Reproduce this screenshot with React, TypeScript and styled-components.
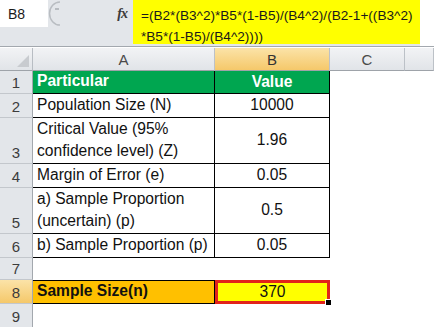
import React from 'react';
import styled, { createGlobalStyle, css } from 'styled-components';

const GlobalStyle = createGlobalStyle`
  html, body {
    margin: 0;
    padding: 0;
    background: #ffffff;
  }
  body {
    font-family: 'Liberation Sans', Arial, sans-serif;
  }
`;

const Page = styled.div`
  width: 434px;
  height: 327px;
  overflow: hidden;
  background: #ffffff;
  display: flex;
  flex-direction: column;
`;

const FormulaBar = styled.div`
  display: flex;
  height: 46px;
  background: #e3e6ea;
  border-bottom: 1px solid #a3a8ae;
  flex-shrink: 0;
`;

const LeftPanel = styled.div`
  width: 133px;
  display: flex;
  flex-direction: column;
`;

const TopStrip = styled.div`
  height: 27px;
  display: flex;
  align-items: center;
`;

const NameBox = styled.div`
  width: 48px;
  height: 27px;
  background: #ffffff;
  box-sizing: border-box;
  padding-left: 8px;
  display: flex;
  align-items: center;
  font-size: 14px;
  color: #1a1a1a;
`;

const Splitter = styled.svg`
  width: 14px;
  height: 27px;
  flex-shrink: 0;
`;

const FxLabel = styled.div`
  margin-left: auto;
  margin-right: 6px;
  font-family: 'Liberation Serif', 'Times New Roman', serif;
  font-style: italic;
  font-weight: bold;
  font-size: 14px;
  color: #3a3a3a;
  letter-spacing: -1px;
`;

const FormulaInput = styled.div`
  width: 287px;
  height: 44px;
  background: #ffff00;
  box-sizing: border-box;
  padding: 5px 0 0 8px;
  font-size: 13.6px;
  line-height: 21px;
  color: #1a1a1a;
  white-space: nowrap;
`;

const FormulaRest = styled.div`
  flex: 1;
  background: #ffffff;
`;

const Sheet = styled.div`
  display: grid;
  grid-template-columns: 33px 182px 115px 75px 1fr;
  grid-template-rows: 23px 23px 24px 46px 24px 46px 24px 22px 24px 24px;
  margin-top: 1px;
`;

const headerBase = css`
  box-sizing: border-box;
  color: #3c3c3c;
  font-size: 15px;
  display: flex;
  justify-content: center;
`;

const Corner = styled.div`
  ${headerBase};
  position: relative;
  background: linear-gradient(#f2f3f5, #e1e4e8);
  border-right: 1px solid #b8bdc3;
  border-bottom: 1px solid #9ea3a9;
`;

const CornerTriangle = styled.div`
  position: absolute;
  right: 3px;
  bottom: 3px;
  width: 0;
  height: 0;
  border-left: 12px solid transparent;
  border-bottom: 12px solid #c8cbcf;
`;

const ColHeader = styled.div<{ $selected?: boolean }>`
  ${headerBase};
  align-items: center;
  border-right: 1px solid #bcc1c7;
  border-bottom: 1px solid #9ea3a9;
  background: ${(p) =>
    p.$selected ? 'linear-gradient(#fbe3a8, #f5c86a)' : 'linear-gradient(#f2f3f5, #e1e4e8)'};
  color: ${(p) => (p.$selected ? '#333' : '#4a4a4a')};
`;

const RowHeader = styled.div<{ $selected?: boolean }>`
  ${headerBase};
  align-items: flex-end;
  padding-bottom: 2px;
  border-right: 1px solid #a3a8ae;
  border-bottom: 1px solid #c3c7cc;
  background: ${(p) => (p.$selected ? 'linear-gradient(#fbe3a8, #f5c86a)' : '#e3e6ea')};
  color: #3c3c3c;
`;

type CellKind = 'plain' | 'head' | 'empty' | 'result';

const Cell = styled.div<{ $kind?: CellKind; $center?: boolean }>`
  box-sizing: border-box;
  font-size: 15.6px;
  line-height: 22px;
  color: #111;
  display: flex;
  padding: 0 4px 1px 4px;
  align-items: ${(p) => (p.$center ? 'center' : 'flex-end')};
  justify-content: ${(p) => (p.$center ? 'center' : 'flex-start')};
  ${(p) =>
    p.$kind === 'plain' &&
    css`
      border-right: 1px solid #000;
      border-bottom: 1px solid #000;
    `}
  ${(p) =>
    p.$kind === 'head' &&
    css`
      background: #00a650;
      color: #ffffff;
      font-weight: bold;
      border-right: 1px solid #000;
      border-bottom: 1px solid #000;
    `}
  ${(p) =>
    p.$kind === 'result' &&
    css`
      background: #ffc000;
      font-weight: bold;
      border-right: 1px solid #000;
      border-bottom: 1px solid #000;
      border-top: 1px solid #000;
    `}
`;

const ResultValue = styled.div`
  position: relative;
  box-sizing: border-box;
  background: #ffff00;
  border: 3px solid #e2231a;
  font-size: 15.6px;
  color: #111;
  display: flex;
  align-items: center;
  justify-content: center;
`;

const FillHandle = styled.div`
  position: absolute;
  right: -5px;
  bottom: -5px;
  width: 5px;
  height: 5px;
  background: #000;
  border: 1px solid #fff;
`;

const rows: { n: number; label?: string; value?: string; kind: CellKind; height?: number }[] = [
  { n: 1, label: 'Particular', value: 'Value', kind: 'head' },
  { n: 2, label: 'Population Size (N)', value: '10000', kind: 'plain' },
  { n: 3, label: 'Critical Value (95% confidence level) (Z)', value: '1.96', kind: 'plain' },
  { n: 4, label: 'Margin of Error (e)', value: '0.05', kind: 'plain' },
  { n: 5, label: 'a) Sample Proportion (uncertain) (p)', value: '0.5', kind: 'plain' },
  { n: 6, label: 'b) Sample Proportion (p)', value: '0.05', kind: 'plain' },
  { n: 7, kind: 'empty' },
  { n: 8, label: 'Sample Size(n)', value: '370', kind: 'result' },
  { n: 9, kind: 'empty' },
];

const App: React.FC = () => {
  return (
    <Page>
      <GlobalStyle />
      <FormulaBar>
        <LeftPanel>
          <TopStrip>
            <NameBox>B8</NameBox>
            <Splitter viewBox="0 0 14 27">
              <path d="M12 2 A10 11 0 0 0 12 25" fill="none" stroke="#b9bdc2" strokeWidth="1.5" />
              <path d="M7 9 h4" stroke="#9a9ea3" strokeWidth="1.2" />
            </Splitter>
            <FxLabel>fx</FxLabel>
          </TopStrip>
        </LeftPanel>
        <FormulaInput>
          <div>=(B2*(B3^2)*B5*(1-B5)/(B4^2)/(B2-1+((B3^2)</div>
          <div>*B5*(1-B5)/(B4^2))))</div>
        </FormulaInput>
        <FormulaRest />
      </FormulaBar>
      <Sheet>
        <Corner>
          <CornerTriangle />
        </Corner>
        <ColHeader>A</ColHeader>
        <ColHeader $selected>B</ColHeader>
        <ColHeader>C</ColHeader>
        <ColHeader />
        {rows.map((r) => (
          <React.Fragment key={r.n}>
            <RowHeader $selected={r.n === 8}>{r.n}</RowHeader>
            <Cell $kind={r.kind} $center={r.kind === 'head' && false}>
              {r.label}
            </Cell>
            {r.kind === 'result' ? (
              <ResultValue>
                {r.value}
                <FillHandle />
              </ResultValue>
            ) : (
              <Cell $kind={r.kind} $center>
                {r.value}
              </Cell>
            )}
            <Cell $kind="empty" />
            <Cell $kind="empty" />
          </React.Fragment>
        ))}
      </Sheet>
    </Page>
  );
};

export default App;
